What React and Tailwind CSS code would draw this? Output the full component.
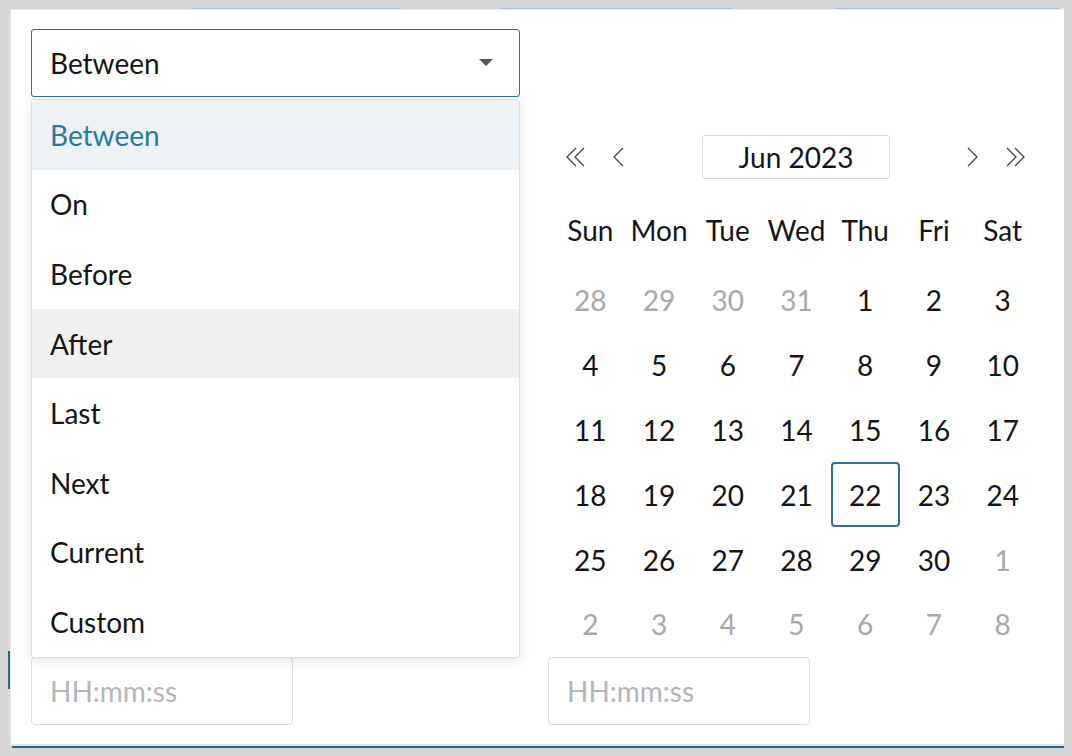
import React from "react";

function Chevron({ dir = "left", double = false }) {
  const w = double ? 20 : 12;
  const pts = (x) =>
    dir === "left"
      ? `${x + 10},1 ${x + 1},10 ${x + 10},19`
      : `${x + 1},1 ${x + 10},10 ${x + 1},19`;
  return (
    <svg width={w} height="20" viewBox={`0 0 ${w} 20`} fill="none" stroke="#444" strokeWidth="1.3" strokeLinejoin="miter">
      <polyline points={pts(0)} />
      {double && <polyline points={pts(8)} />}
    </svg>
  );
}

const options = ["Between", "On", "Before", "After", "Last", "Next", "Current", "Custom"];
const weekdays = ["Sun", "Mon", "Tue", "Wed", "Thu", "Fri", "Sat"];

function buildDays() {
  const days = [];
  [28, 29, 30, 31].forEach((d) => days.push({ d, muted: true }));
  for (let i = 1; i <= 30; i++) days.push({ d: i, muted: false });
  for (let i = 1; i <= 8; i++) days.push({ d: i, muted: true });
  return days;
}

function TimeInput() {
  return (
    <div className="w-[262px] h-[68px] border border-[#dcdcdc] rounded-[4px] flex items-center pl-[18px] text-[28px] text-[#b5b5b5] bg-white">
      HH:mm:ss
    </div>
  );
}

export default function App() {
  const days = buildDays();
  return (
    <div className="w-[1072px] h-[756px] bg-[#d6d6d6] flex flex-col font-['Lato',sans-serif] text-[#151515] overflow-hidden">
      <div className="h-[9px] flex items-end">
        <div className="ml-[193px] w-[207px] h-px bg-[#a9bfe0]" />
        <div className="ml-[100px] w-[233px] h-px bg-[#a9bfe0]" />
        <div className="ml-[102px] w-[225px] h-px bg-[#a9bfe0]" />
        <div className="w-[4px] h-px bg-[#ececec]" />
      </div>
      <div className="flex h-[735px]">
        <div className="w-[10px] flex flex-col">
          <div className="mt-[642px] ml-[8px] w-[2px] h-[38px] bg-[#236a8a]" />
        </div>
        <div className="w-[1054px] bg-white border-l border-t border-[#ebebeb] pt-[19px] pl-[20px] flex gap-[28px]">
          <div className="w-[489px] relative flex flex-col">
            <div className="h-[68px] border border-[#2b7196] rounded-[3px] flex items-center justify-between pl-[18px] pr-[26px] text-[28px]">
              <span>Between</span>
              <svg width="14" height="8" viewBox="0 0 14 8">
                <polygon points="0,0 14,0 7,7" fill="#555" />
              </svg>
            </div>
            <div className="h-[560px]" />
            <TimeInput />
            <div className="absolute top-[70px] left-0 w-[489px] bg-white border border-[#dddddd] rounded-[3px] shadow-[0_3px_12px_rgba(0,0,0,0.1)] z-10 flex flex-col">
              {options.map((o, i) => (
                <div
                  key={o}
                  className={
                    "h-[69.6px] flex items-center pl-[18px] text-[28px] " +
                    (i === 0 ? "bg-[#edf2f6] text-[#2a78a0]" : i === 3 ? "bg-[#f0f0f0]" : "")
                  }
                >
                  {o}
                </div>
              ))}
            </div>
          </div>
          <div className="w-[489px] flex flex-col">
            <div className="h-[106px]" />
            <div className="pl-[8px] flex flex-col w-[489px]">
              <div className="w-[481px] h-[44px] flex items-center justify-between pl-[10px] pr-[11px]">
                <div className="flex items-center gap-[27px]">
                  <Chevron dir="left" double />
                  <Chevron dir="left" />
                </div>
                <div className="w-[188px] h-[44px] border border-[#d9d9d9] rounded-[3px] flex items-center justify-center text-[28px]">
                  Jun 2023
                </div>
                <div className="flex items-center gap-[27px]">
                  <Chevron dir="right" />
                  <Chevron dir="right" double />
                </div>
              </div>
              <div className="w-[481px] grid grid-cols-7 mt-[26px] h-[50px] items-center">
                {weekdays.map((w) => (
                  <div key={w} className="text-center text-[28px]">{w}</div>
                ))}
              </div>
              <div className="w-[481px] grid grid-cols-7 mt-[13px]">
                {days.map((x, i) => (
                  <div
                    key={i}
                    className={
                      "h-[64.8px] flex items-center justify-center text-[28px] rounded-[4px] " +
                      (x.muted ? "text-[#a8a8a8] " : "") +
                      (!x.muted && x.d === 22 ? "border-2 border-[#2b7196]" : "")
                    }
                  >
                    {x.d}
                  </div>
                ))}
              </div>
            </div>
            <TimeInput />
          </div>
        </div>
      </div>
      <div className="ml-[10px] w-[1054px] h-[2px] bg-[#e3e3e3]" />
      <div className="ml-[12px] w-[1052px] h-[2px] bg-[#236a8a]" />
    </div>
  );
}
